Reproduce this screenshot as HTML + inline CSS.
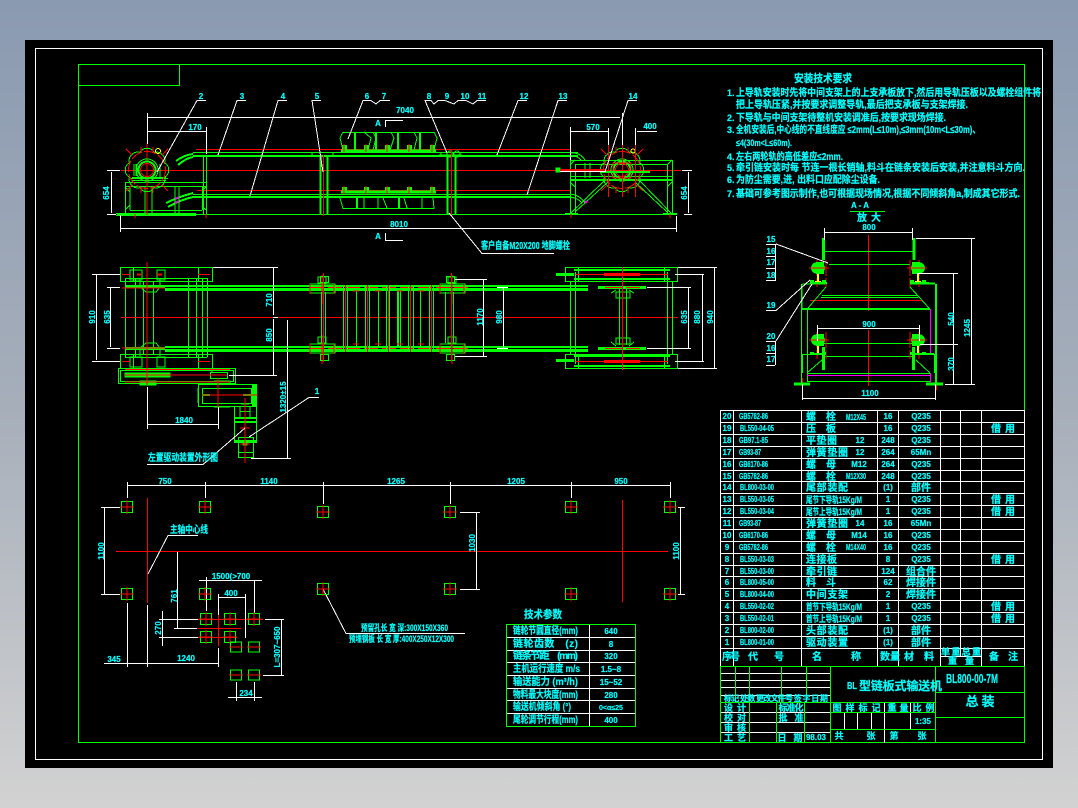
<!DOCTYPE html>
<html lang="zh">
<head>
<meta charset="utf-8">
<title>BL800-00-7M</title>
<style>
html,body{margin:0;padding:0;width:1078px;height:808px;overflow:hidden;background:linear-gradient(#8a9ab1 0%,#a6aeba 50%,#d2d2d2 100%)}
svg{position:absolute;left:0;top:0;display:block;font-size:9px;font-family:"Liberation Sans","Noto Sans CJK SC",sans-serif;font-weight:700}
text{fill:#0ff;stroke:#0ff;stroke-width:.2}
.c{text-anchor:middle}
.s{font-size:8px}
.d{font-size:8px;text-anchor:middle}
.h{font-size:10px;text-anchor:middle}
.n{font-size:10px}
</style>
</head>
<body>
<svg width="1078" height="808" viewBox="0 0 1078 808" shape-rendering="crispEdges">
<defs>
<g id="spr" fill="none">
<path stroke="#0f0" d="M17.6,7.3A8.5,8.5 0 0 1 7.3,17.6A8.5,8.5 0 0 1 -7.3,17.6A8.5,8.5 0 0 1 -17.6,7.3A8.5,8.5 0 0 1 -17.6,-7.3A8.5,8.5 0 0 1 -7.3,-17.6A8.5,8.5 0 0 1 7.3,-17.6A8.5,8.5 0 0 1 17.6,-7.3A8.5,8.5 0 0 1 17.6,7.3Z"/>
<circle r="18.5" stroke="#f00" stroke-dasharray="12 2"/>
<path stroke="#f00" d="M-15,-15L-21,-21M15,-15L21,-21M-15,15L-21,21M15,15L21,21M-6,-18V-23M6,-18V-23M-6,18V23M6,18V23"/>
<circle r="11" stroke="#0f0"/><circle r="9" stroke="#0f0"/><circle r="8" stroke="#0f0"/>
<circle r="6.5" stroke="#f00"/>
</g>
<g id="sq" fill="none">
<rect x="-5.5" y="-5.5" width="11" height="11" stroke="#0f0"/>
<path stroke="#f00" d="M-7,0H7M0,-7V7"/>
</g>
<g id="sq2" fill="none">
<rect x="-5.5" y="-5" width="11" height="10" stroke="#0f0"/>
<path stroke="#f00" d="M-7,0H7"/>
</g>
<g id="blk" fill="none">
<rect x="-2" y="-4" width="5" height="6" fill="#0f0"/>
<path stroke="#f00" d="M0,-5V3"/>
</g>
<g id="brg" fill="none">
<path stroke="#f00" d="M-1,-8V8M8,-8V8M-1,10V19M8,10V19"/>
<ellipse cx="0" cy="0" rx="7" ry="6" fill="#0f0"/>
<rect x="2" y="-6" width="4" height="12" fill="#0f0"/>
<path stroke="#f00" d="M-9,0H11"/>
<path stroke="#ff0" stroke-width="2" d="M0,6V14M-3,14H3"/>
<rect x="-8" y="12" width="4" height="3" fill="#0f0"/>
<rect x="4" y="12" width="4" height="3" fill="#0f0"/>
</g>
<g id="bb" fill="none" stroke="#0f0">
<rect x="-12" y="-4" width="25" height="9"/>
<rect x="-4" y="-11" width="8" height="6"/>
<path stroke="#f00" d="M0,-13V16M-12,-4V6M12,-4V6"/>
</g>
</defs>

<rect x="25" y="40" width="1028" height="728" fill="#000"/>
<rect x="35.5" y="48.5" width="1007" height="711" fill="none" stroke="#fff"/>

<!-- drawing frame -->
<g fill="none" stroke="#0f0">
<rect x="78.5" y="64.5" width="946" height="678"/>
<path d="M78.5,85.5H179.5V64.5"/>
</g>

<!-- ELEVATION VIEW -->
<g fill="none">
<path stroke="#f00" d="M121,170.5H681M196,149.5H570M197,190.5H570"/>
<g stroke="#0f0">
<path d="M193,152.5H578M193,155.5H578M193,156.5H578M193,194.5H570M193,197.5H570M193,196.5H570M117,214.5H677"/>
<path d="M116,213.5H196M116,215.5H196M565,213.5H578M663,213.5H677"/>
<path stroke-width="2" d="M176,161Q184,155 193,154M178,165Q186,158 193,157M166,203Q178,197 193,193M168,207Q180,200 193,197"/>
<path d="M570,153Q580,152 585,160M572,156Q578,156 581,160"/>
<path d="M570,194Q580,195 585,203M570,197Q578,198 582,203"/>
<rect x="125.5" y="182.5" width="81" height="32"/>
<path d="M125,186.5H206M130,186V210M130,210.5H202M202.5,186V210M203.5,156V214M206.5,156V214M175,186V214M179,186V214M152,186V214M145,186V214M125,187L130,192M125,210L130,205M206,187L202,191M206,210L202,206"/>
<path d="M134,164V176M136,164V176M137,164V176M160,177V164M132,177.5H166M130,178.5H168M132,180.5H166"/>
<path stroke-width="2" d="M320.5,155V214M327.5,155V214M447.5,155V214M455.5,155V214"/>
<path stroke-width="2" d="M322,197H326M449,197H454"/>
<path d="M312,153V157M333,153V157M439,155H462M441,153V157M460,153V157"/>
<circle cx="450" cy="154" r="3"/><circle cx="457" cy="154" r="3"/>
<path d="M343,132.5H434M343,132L340,138L343,150M434,132L437,138L434,150M364,132L371,138L368,150M373,132L376,138L373,150M391,132L394,138L390,150M414,132L417,138L414,150"/>
<path stroke-width="2" d="M355,132V150M376,132V150M398,132V150M420,132V150"/>
<path stroke-width="3" d="M341,151H436"/>
<path d="M340,198L343,208.5H434L433,198M340,197.5H436M383,198L387,208M404,198L407,208M378,198V208M364,198V208M422,198V208"/>
<path stroke-width="2" d="M357,198V208M399,198V208"/>
<path stroke-width="3" d="M341,192H436"/>
<path d="M570.5,160.5H672.5V214M570.5,160V214M575.5,164V214M576,164.5H667M667.5,164V214M570,176.5H672M570,179.5H672M570,180.5H672M575,212L608,182M570,214L605,180M635,182L667,212M639,180L672,214"/>
<path d="M585,163V178M590,163V178M667,165L672,160M570,165L575,160M570,182L575,187M667,187L672,182"/>
</g>
<use href="#blk" x="344" y="149"/><use href="#blk" x="366" y="149"/><use href="#blk" x="387" y="149"/><use href="#blk" x="409" y="149"/><use href="#blk" x="432" y="149"/>
<use href="#blk" x="344" y="191"/><use href="#blk" x="366" y="191"/><use href="#blk" x="387" y="191"/><use href="#blk" x="409" y="191"/><use href="#blk" x="432" y="191"/>
<path stroke="#f00" d="M323.5,155V216M451.5,150V216M147,143V215M135,214V218M206,214V218M571,214V218M670,214V218"/>
<path stroke="#f0f" stroke-width="2" d="M175,199L179,197M175,203L179,201M585,201L587,203M585,203L587,201"/>
<use href="#spr" x="147" y="170"/>
<use href="#spr" x="622" y="170"/>
<circle cx="158" cy="151" r="2.5" stroke="#ff0"/>
<circle cx="633" cy="151" r="2" stroke="#ff0"/>
<path stroke="#f00" d="M608.5,145V197M622.5,145V197M635.5,145V197"/>
<rect x="613" y="163" width="18" height="15" stroke="#f00"/>
<path stroke="#0f0" stroke-width="2" d="M600,172H650"/>
<rect x="556" y="168" width="4" height="4" fill="#0f0" stroke="#0f0"/>
<path stroke="#f00" stroke-width="2" d="M560,170H605"/>
<path stroke="#fff" d="M560,171.5H606"/>
<g stroke="#fff">
<path d="M148,117.5H620M147.5,113V144M148,131.5H206M206.5,127V154M121,228.5H676M120.5,215V232M676.5,216V232M107,170.5H120M107,214.5H116M111.5,172V213"/>
<path d="M570.5,127V160M571,131.5H608M608.5,128V145M635.5,128V145M637,131.5H657M622.5,113V145M682,170.5H692M684,214.5H692M688.5,172V213"/>
<path d="M385,120.5H403M385.5,120V127M385,240.5H403M385.5,233V240"/>
<path d="M206,100.5H197L157,172M246,100.5H237L218,155M287,100.5H278L250,196M321,100.5H312L323,172"/>
<path d="M390,100.5H380L376,104L371,100.5H363L348,139"/>
<path d="M486,100.5H477L473,104L466,100.5H458L454,104L445,100.5H438L434,104L431,100.5H425L447,153"/>
<path d="M527,100.5H518L497,155M567,100.5H558L527,195M637,100.5H628L605,172"/>
<path d="M449,213L482,253.5H554"/>
</g>
</g>
<g>
<text class="d" x="201" y="99">2</text>
<text class="d" x="242" y="99">3</text>
<text class="d" x="283" y="99">4</text>
<text class="d" x="317" y="99">5</text>
<text class="d" x="367" y="99">6</text>
<text class="d" x="384" y="99">7</text>
<text class="d" x="429" y="99">8</text>
<text class="d" x="447" y="99">9</text>
<text class="d" x="465" y="99">10</text>
<text class="d" x="482" y="99">11</text>
<text class="d" x="524" y="99">12</text>
<text class="d" x="563" y="99">13</text>
<text class="d" x="633" y="99">14</text>
<text class="d" x="405" y="113">7040</text>
<text class="d" x="195" y="130">170</text>
<text class="d" x="593" y="130">570</text>
<text class="d" x="650" y="129">400</text>
<text class="d" x="399" y="227">8010</text>
<text class="d" x="378" y="126">A</text>
<text class="d" x="378" y="239">A</text>
<text class="d" transform="rotate(-90 109 193)" x="109" y="193">654</text>
<text class="d" transform="rotate(-90 687 193)" x="687" y="193">654</text>
<text x="481" y="249" font-size="10" textLength="89" lengthAdjust="spacingAndGlyphs">客户自备M20X200 地脚螺栓</text>
</g>

<!-- PLAN VIEW -->
<g fill="none">
<path stroke="#0f0" d="M125.5,278.5H207.5V357M125.5,278V357M125,357.5H207M135.5,278V357M143.5,282V354M153.5,282V354M188.5,278V357M196.5,278V357M202.5,278V357"/>
<g stroke="#0f0">
<rect x="120.5" y="267.5" width="92" height="14"/><rect x="120.5" y="267.5" width="13" height="14"/><rect x="198.5" y="267.5" width="14" height="14"/>
<rect x="120.5" y="354.5" width="92" height="14"/><rect x="120.5" y="354.5" width="13" height="14"/><rect x="198.5" y="354.5" width="14" height="14"/>
<path d="M130,270H142V280H130ZM157,270H165V280H157ZM130,357H142V367H130ZM157,357H165V367H157Z"/>
<path d="M140,279V287L146,292H156L160,287V279M140,356V348L146,343H156L160,348V356"/>
<rect x="118.5" y="368.5" width="117" height="15"/><rect x="120.5" y="370.5" width="113" height="11"/>
<rect x="125" y="373" width="45" height="4" fill="#0f0"/>
<rect x="210.5" y="372.5" width="17" height="6"/>
<path d="M140,381H156V385H140Z" fill="#0f0"/>
<path d="M213,369H226M212,368V372"/>
<rect x="198.5" y="384.5" width="58" height="22"/>
<rect x="202.5" y="388.5" width="49" height="15"/>
<path stroke-width="2" d="M202,395H210M243,395H251M253,385V406M255,385V406"/>
<path d="M214,381H230V384M214,407H230M198,388V403"/>
<path d="M234.5,406V417M256.5,406V417M240,406V417M250,406V417M240,411.5H250M241,404H249"/>
<path stroke-width="2" d="M234,418H257M234,422H257M234,441H257"/>
<rect x="234.5" y="417.5" width="22" height="25"/>
<rect x="238.5" y="437.5" width="15" height="20"/>
<path d="M238,452.5H253"/>
<rect x="243" y="441" width="4" height="4" fill="#0f0"/>
</g>
<rect x="125" y="285" width="40" height="3" fill="#0f0"/>
<rect x="125" y="347" width="40" height="3" fill="#0f0"/>
<rect x="165" y="285" width="423" height="2" fill="#0f0"/>
<rect x="165" y="288" width="423" height="3" fill="#0f0"/>
<rect x="165" y="346" width="423" height="2" fill="#0f0"/>
<rect x="165" y="349" width="423" height="3" fill="#0f0"/>
<path stroke="#f00" d="M121,317.5H678M122,288H165M122,348H165M125,375H227M125,369.5H230M125,382H230M202,395H258M245,398V463M218,378V407M147,262V385M122,274.5H130M198,274.5H210M122,361.5H130M198,361.5H210"/>
<path stroke="#f00" stroke-dasharray="14 4" d="M310,287.5H470M310,348.5H470"/>
<path stroke="#f00" d="M240,428H250M240,444H250"/>
<path stroke="#f00" stroke-width="2" d="M137,274.5H141M157,274.5H162"/>
<use href="#bb" x="322" y="288"/>
<use href="#bb" x="322" y="348"/>
<use href="#bb" x="452" y="288"/>
<use href="#bb" x="452" y="348"/>
<g stroke="#0f0">
<rect x="320.5" y="276.5" width="8" height="6" />
<rect x="446.5" y="276.5" width="8" height="6" />
<rect x="320.5" y="354.5" width="8" height="6" />
<rect x="446.5" y="354.5" width="8" height="6" />
<path d="M321.5,292V343M325.5,292V343M445.5,292V343M453.5,292V343"/>
<path d="M343.5,285V352M347.5,285V352M365.5,285V352M369.5,285V352M386.5,285V352M389.5,285V352M408.5,285V352M413.5,285V352M429.5,285V352M433.5,285V352M356.5,290V346M378.5,290V346M400.5,290V346M420.5,290V346"/>
<path stroke-width="2" d="M398,290V346"/>
</g>
<path stroke="#f00" d="M345.5,285V352M367.5,285V352M388.5,285V352M410.5,285V352M431.5,285V352M323.5,273V362M451.5,273V362"/>
<path stroke="#f00" d="M353,291H359M375,291H381M397,291H403M418,291H424M353,344H359M375,344H381M397,344H403M418,344H424"/>
<g stroke="#0f0">
<rect x="565.5" y="267.5" width="112" height="14"/><rect x="565.5" y="267.5" width="13" height="14"/><rect x="664.5" y="267.5" width="13" height="14"/>
<rect x="565.5" y="354.5" width="112" height="14"/><rect x="565.5" y="354.5" width="13" height="14"/><rect x="664.5" y="354.5" width="13" height="14"/>
<path d="M570.5,281V354M575.5,272V364M667.5,272V364M672.5,281V354M619.5,288V345M626.5,288V345"/>
<path d="M611,293L616,290M634,293L629,290M611,342L616,346M634,342L629,346M616,292H630V298H616ZM616,338H630V344H616Z"/>
</g>
<path stroke="#0f0" stroke-width="2" d="M574,270H670M574,279H670M574,356H670M574,366H670"/>
<rect x="598" y="286" width="48" height="3" fill="#0f0"/>
<rect x="598" y="347" width="48" height="3" fill="#0f0"/>
<rect x="556" y="273" width="18" height="3" fill="#0f0"/>
<rect x="556" y="359" width="18" height="3" fill="#0f0"/>
<path stroke="#f00" d="M622.5,267V370M576,274.5H668M576,361.5H668"/>
<path stroke="#f00" stroke-width="3" d="M604,274.5H640M604,361.5H640"/>
<path stroke="#f00" d="M605,287.5H622M626,287.5H640M605,348.5H622M626,348.5H640"/>
<g stroke="#fff">
<path d="M92,274.5H120M92,361.5H120M96.5,275V360M107,287.5H120M107,348.5H120M110.5,288V347"/>
<path d="M213,267.5H278M273.5,268V315M273,317.5H278M273.5,319V375M229,375.5H277"/>
<path d="M287.5,320V458M251,458.5H291M147.5,387V429M218.5,407V429M148,424.5H218"/>
<path d="M455,279.5H487M455,356.5H487M483.5,280V356M497,287.5H508M497,348.5H508M503.5,288V348"/>
<path d="M678,267.5H717M678,368.5H717M714.5,268V368M675,274.5H704M675,361.5H704M702.5,275V361M647,287.5H691M647,348.5H691M688.5,288V348"/>
<path d="M319,397.5H309L249,437M147,464.5H203L245,428"/>
</g>
</g>
<g>
<text class="d" x="317" y="394">1</text>
<text class="d" x="184" y="423">1840</text>
<text class="d" transform="rotate(-90 95 317)" x="95" y="317">910</text>
<text class="d" transform="rotate(-90 110 317)" x="110" y="317">635</text>
<text class="d" transform="rotate(-90 272 300)" x="272" y="300">710</text>
<text class="d" transform="rotate(-90 272 335)" x="272" y="335">850</text>
<text class="d" transform="rotate(-90 286 397)" x="286" y="397">1320±15</text>
<text class="d" transform="rotate(-90 483 317)" x="483" y="317">1170</text>
<text class="d" transform="rotate(-90 502 317)" x="502" y="317">980</text>
<text class="d" transform="rotate(-90 687 317)" x="687" y="317">635</text>
<text class="d" transform="rotate(-90 700 317)" x="700" y="317">880</text>
<text class="d" transform="rotate(-90 713 317)" x="713" y="317">940</text>
<text x="148" y="461" font-size="10" textLength="70" lengthAdjust="spacingAndGlyphs">左置驱动装置外形图</text>
</g>

<!-- FOUNDATION -->
<g fill="none">
<path stroke="#f00" d="M116,551.5H668M147.5,498V603M622.5,500V602M218.5,605V646M197,619.5H263M197,628.5H241M197,637.5H237"/>
<path stroke="#fff" d="M127,485.5H670M127.5,482V498M205.5,482V498M323.5,482V504M450.5,482V504M571.5,482V498M670.5,482V498M101,507.5H120M101,594.5H120M104.5,508V594M678,507.5H685M678,594.5H685M680.5,508V594M460,512.5H480M460,589.5H480M476.5,513V589M198,535.5H168L148,574M177.5,552V628M174,628.5H197M199,580.5H262M206.5,577V611M254.5,581V614M218,597.5H245M218.5,594V615M245.5,594V638M159,619.5H198M159,637.5H198M162.5,611V646M265,619.5H284M263,675.5H284M281.5,619V675M104,663.5H218M127.5,603V667M147.5,605V667M218.5,648V667M228,697.5H262M236.5,682V701M254.5,682V701M323,589L346,633.5H465"/>
<use href="#sq" x="127" y="507"/><use href="#sq" x="205" y="507"/><use href="#sq" x="323" y="512"/><use href="#sq" x="450" y="512"/><use href="#sq" x="571" y="507"/><use href="#sq" x="670" y="507"/>
<use href="#sq" x="127" y="594"/><use href="#sq" x="205" y="594"/><use href="#sq" x="323" y="589"/><use href="#sq" x="450" y="589"/><use href="#sq" x="571" y="594"/><use href="#sq" x="670" y="594"/>
<use href="#sq" x="206" y="619"/><use href="#sq" x="230" y="619"/><use href="#sq" x="254" y="619"/><use href="#sq" x="206" y="637"/><use href="#sq" x="230" y="637"/>
<use href="#sq2" x="236" y="647"/><use href="#sq2" x="254" y="647"/><use href="#sq2" x="236" y="675"/><use href="#sq2" x="254" y="675"/>
</g>
<g>
<text class="d" x="165" y="484">750</text>
<text class="d" x="269" y="484">1140</text>
<text class="d" x="396" y="484">1265</text>
<text class="d" x="516" y="484">1205</text>
<text class="d" x="621" y="484">950</text>
<text class="d" transform="rotate(-90 104 551)" x="104" y="551">1100</text>
<text class="d" transform="rotate(-90 679 551)" x="679" y="551">1100</text>
<text class="d" transform="rotate(-90 475 543)" x="475" y="543">1030</text>
<text class="d" transform="rotate(-90 177 596)" x="177" y="596">761</text>
<text class="d" transform="rotate(-90 161 628)" x="161" y="628">270</text>
<text class="d" transform="rotate(-90 280 647)" x="280" y="647">L=307~650</text>
<text class="d" x="231" y="579">1500(&gt;700</text>
<text class="d" x="231" y="596">400</text>
<text class="d" x="114" y="662">345</text>
<text class="d" x="186" y="661">1240</text>
<text class="d" x="246" y="696">234</text>
<text x="170" y="533" font-size="10" textLength="38" lengthAdjust="spacingAndGlyphs">主轴中心线</text>
<text x="361" y="631" font-size="9" textLength="87" lengthAdjust="spacingAndGlyphs">预留孔长 宽 深:300X150X360</text>
<text x="349" y="642" font-size="9" textLength="105" lengthAdjust="spacingAndGlyphs">预埋钢板 长 宽 厚:400X250X12X300</text>
</g>

<!-- TECH PARAMS -->
<g fill="none">
<path stroke="#fff" d="M506,637.5H635M506,650.5H635M506,662.5H635M506,675.5H635M506,688.5H635M506,700.5H635M506,713.5H635M589.5,624V727"/>
<rect x="506.5" y="624.5" width="129" height="102" stroke="#0f0"/>
</g>
<g>
<text x="524" y="618" font-size="11" textLength="38" lengthAdjust="spacingAndGlyphs">技术参数</text>
<text x="513" y="634" font-size="10" textLength="65" lengthAdjust="spacingAndGlyphs">链轮节圆直径(mm)</text>
<text x="513" y="647" font-size="10" textLength="65" lengthAdjust="spacing">链轮齿数　(z)</text>
<text x="513" y="659" font-size="10" textLength="65" lengthAdjust="spacing">链条节距　(mm)</text>
<text x="513" y="672" font-size="10" textLength="67" lengthAdjust="spacingAndGlyphs">主机运行速度 m/s</text>
<text x="513" y="685" font-size="10" textLength="65" lengthAdjust="spacingAndGlyphs">输送能力 (m³/h)</text>
<text x="513" y="698" font-size="10" textLength="65" lengthAdjust="spacingAndGlyphs">物料最大块度(mm)</text>
<text x="513" y="710" font-size="10" textLength="58" lengthAdjust="spacingAndGlyphs">输送机倾斜角 (°)</text>
<text x="513" y="723" font-size="10" textLength="65" lengthAdjust="spacingAndGlyphs">尾轮调节行程(mm)</text>
<text class="c" x="611" y="634" font-size="8">640</text>
<text class="c" x="611" y="647" font-size="8">8</text>
<text class="c" x="611" y="659" font-size="8">320</text>
<text class="c" x="611" y="672" font-size="8">1.5~8</text>
<text class="c" x="611" y="685" font-size="8">15~52</text>
<text class="c" x="611" y="698" font-size="8">280</text>
<text class="c" x="611" y="710" font-size="7">0&lt;α≤25</text>
<text class="c" x="611" y="723" font-size="8">400</text>
</g>

<!-- INSTALL NOTES -->
<g>
<text x="794" y="82" font-size="11" textLength="58" lengthAdjust="spacingAndGlyphs">安装技术要求</text>
<text x="727" y="96" font-size="9">1.</text>
<text x="736" y="96" font-size="10" textLength="305" lengthAdjust="spacingAndGlyphs">上导轨安装时先将中间支架上的上支承板放下,然后用导轨压板以及螺栓组件将</text>
<text x="736" y="108" font-size="10" textLength="232" lengthAdjust="spacingAndGlyphs">把上导轨压紧,并按要求调整导轨,最后把支承板与支架焊接.</text>
<text x="727" y="121" font-size="9">2.</text>
<text x="736" y="121" font-size="10" textLength="210" lengthAdjust="spacingAndGlyphs">下导轨与中间支架待整机安装调准后,按要求现场焊接.</text>
<text x="727" y="133" font-size="9">3.</text>
<text x="736" y="133" font-size="10" textLength="244" lengthAdjust="spacingAndGlyphs">全机安装后,中心线的不直线度应 ≤2mm(L≤10m),≤3mm(10m&lt;L≤30m)、</text>
<text x="736" y="146" font-size="9" textLength="56" lengthAdjust="spacingAndGlyphs">≤4(30m&lt;L≤60m).</text>
<text x="727" y="160" font-size="9">4.</text>
<text x="736" y="160" font-size="10" textLength="107" lengthAdjust="spacingAndGlyphs">左右两轮轨的高低差应≤2mm.</text>
<text x="727" y="171" font-size="9">5.</text>
<text x="736" y="171" font-size="10" textLength="289" lengthAdjust="spacingAndGlyphs">牵引链安装时每 节连一根长销轴,料斗在链条安装后安装,并注意料斗方向.</text>
<text x="727" y="183" font-size="9">6.</text>
<text x="736" y="183" font-size="10" textLength="144" lengthAdjust="spacingAndGlyphs">为防尘需要,进, 出料口应配除尘设备.</text>
<text x="727" y="197" font-size="9">7.</text>
<text x="736" y="197" font-size="10" textLength="284" lengthAdjust="spacingAndGlyphs">基础可参考图示制作,也可根据现场情况,根据不同倾斜角a,制成其它形式.</text>
</g>

<!-- SECTION A-A -->
<g fill="none">
<path stroke="#0f0" d="M850,211.5H885"/>
<path stroke="#f00" d="M868.5,235V311M868.5,330V386M810,300.5H923M802.5,378V390M936.5,378V390"/>
<g stroke="#0f0">
<path stroke-width="3" d="M823.5,238V260M914,238V260M823.5,347V370M913.5,347V370M794,384H810M926,384H943"/>
<path stroke-width="2" d="M810,283.5H827M910,283.5H935M936,284V384"/>
<path d="M823,251.5H915M829,264.5H910M801.5,284V383M802.5,284H810M807.5,309V382"/>
<path d="M802,284V308M826,287L808,308M910,287L929,308M822,295.5H917M821,297.5H918M802,308.5H930M802,309.5H930"/>
<path d="M823,343.5H913M802,354.5H823M913,354.5H934M823,356.5H913M802.5,354V373M934.5,354V373M822,360L807,373M916,360L930,373M807,373.5H930M807,381.5H930"/>
</g>
<path stroke="#f0f" d="M930.5,309V353M930.5,373V383M807,375.5H930"/>
<use href="#brg" x="818" y="268"/>
<g transform="translate(918 268) scale(-1 1)"><use href="#brg"/></g>
<use href="#brg" x="818" y="340"/>
<g transform="translate(918 340) scale(-1 1)"><use href="#brg"/></g>
<path stroke="#0f0" stroke-width="2" d="M810,283H827M910,283H929M810,354H823M913,354H934"/>
<g stroke="#fff">
<path d="M824,232.5H912M824.5,228V240M912.5,228V240M817,328.5H919M817.5,325V341M919.5,325V341"/>
<path d="M916,238.5H975M971.5,238V384M917,273.5H958M920,344.5H958M945,384.5H975M953.5,273V384M802,398.5H935M802.5,384V400M935.5,384V400"/>
<path d="M766,244.5H776M766,256.5H775M766,268.5H775M766,280.5H776M775.5,244V280M776,244L828,263"/>
<path d="M766,310.5H776L810,280"/>
<path d="M766,341.5H776M766,353.5H775M766,365.5H775M775.5,341V365M776,341L812,284"/>
</g>
</g>
<g>
<text class="d" x="860" y="208">A - A</text>
<text class="c" x="862" y="221" font-size="10">放</text>
<text class="c" x="876" y="221" font-size="10">大</text>
<text class="d" x="869" y="230">800</text>
<text class="d" x="869" y="327">900</text>
<text class="d" x="870" y="396">1100</text>
<text class="d" transform="rotate(-90 970 328)" x="970" y="328">1245</text>
<text class="d" transform="rotate(-90 954 319)" x="954" y="319">540</text>
<text class="d" transform="rotate(-90 954 364)" x="954" y="364">370</text>
<text class="d" x="771" y="242">15</text>
<text class="d" x="771" y="254">16</text>
<text class="d" x="771" y="265">17</text>
<text class="d" x="771" y="278">18</text>
<text class="d" x="771" y="308">19</text>
<text class="d" x="771" y="339">20</text>
<text class="d" x="771" y="351">16</text>
<text class="d" x="771" y="362">17</text>
</g>

<!-- PARTS LIST lines -->
<g fill="none" stroke="#fff">
<path d="M720,410.5H1025M720,422.5H1025M720,434.5H1025M720,446.5H1025M720,458.5H1025M720,470.5H1025M720,481.5H1025M720,493.5H1025M720,505.5H1025M720,517.5H1025M720,529.5H1025M720,541.5H1025M720,553.5H1025M720,565.5H1025M720,576.5H1025M720,588.5H1025M720,600.5H1025M720,612.5H1025M720,624.5H1025M720,636.5H1025M720,648.5H1025"/>
<path d="M720.5,410V666M733.5,410V666M801.5,410V666M877.5,410V666M898.5,410V666M940.5,410V666M960.5,410V656M981.5,410V666M1024.5,410V666M940,656.5H981"/>
<path d="M720,673.5H830M720,680.5H830M720,687.5H830M720,695.5H830M720,712.5H830M720,722.5H830M720,732.5H830M884.5,702V743M910.5,702V729M844.5,712V729M857.5,712V729M871.5,712V729"/>
</g>
<g fill="none" stroke="#0f0">
<path d="M720,666.5H1025M720.5,666V743M735.5,666V703M749.5,666V743M781.5,666V703M806.5,666V703M720,702.5H935M776.5,703V743M804.5,703V743M830.5,666V743M935.5,666V743M935,692.5H1025M935,717.5H1025M830,712.5H935M830,729.5H935"/>
</g>

<!-- PARTS TEXT -->
<g>
<text class="c s" x="727" y="419">20</text><text class="s" x="739" y="419" textLength="29" lengthAdjust="spacingAndGlyphs">GB5782-86</text><text class="n" x="806" y="420" textLength="30" lengthAdjust="spacing">螺 栓</text><text class="s" x="846" y="420" textLength="20" lengthAdjust="spacingAndGlyphs">M12X45</text><text class="c s" x="888" y="419">16</text><text class="c s" x="921" y="419">Q235</text>

<text class="c s" x="727" y="431">19</text><text class="s" x="740" y="431" textLength="34" lengthAdjust="spacingAndGlyphs">BL550-04-05</text><text class="n" x="806" y="432" textLength="30" lengthAdjust="spacing">压 板</text><text class="c s" x="888" y="431">16</text><text class="c s" x="921" y="431">Q235</text><text class="c n" x="1003" y="432" textLength="24" lengthAdjust="spacing">借 用</text>

<text class="c s" x="727" y="443">18</text><text class="s" x="739" y="443" textLength="29" lengthAdjust="spacingAndGlyphs">GB97.1-85</text><text class="n" x="806" y="444" textLength="31" lengthAdjust="spacing">平垫圈</text><text class="c s" x="860" y="443">12</text><text class="c s" x="888" y="443">248</text><text class="c s" x="921" y="443">Q235</text>

<text class="c s" x="727" y="455">17</text><text class="s" x="739" y="455" textLength="22" lengthAdjust="spacingAndGlyphs">GB93-87</text><text class="n" x="806" y="456" textLength="42" lengthAdjust="spacing">弹簧垫圈</text><text class="c s" x="860" y="455">12</text><text class="c s" x="888" y="455">264</text><text class="c s" x="921" y="455">65Mn</text>

<text class="c s" x="727" y="467">16</text><text class="s" x="739" y="467" textLength="29" lengthAdjust="spacingAndGlyphs">GB6170-86</text><text class="n" x="806" y="468" textLength="30" lengthAdjust="spacing">螺 母</text><text class="c s" x="859" y="467">M12</text><text class="c s" x="888" y="467">264</text><text class="c s" x="921" y="467">Q235</text>

<text class="c s" x="727" y="479">15</text><text class="s" x="739" y="479" textLength="29" lengthAdjust="spacingAndGlyphs">GB5782-86</text><text class="n" x="806" y="480" textLength="30" lengthAdjust="spacing">螺 栓</text><text class="s" x="846" y="479" textLength="20" lengthAdjust="spacingAndGlyphs">M12X30</text><text class="c s" x="888" y="479">248</text><text class="c s" x="921" y="479">Q235</text>

<text class="c s" x="727" y="490">14</text><text class="s" x="740" y="490" textLength="34" lengthAdjust="spacingAndGlyphs">BL800-03-00</text><text class="n" x="806" y="491" textLength="42" lengthAdjust="spacing">尾部装配</text><text class="c s" x="888" y="490">(1)</text><text class="c n" x="921" y="491">部件</text>

<text class="c s" x="727" y="502">13</text><text class="s" x="740" y="502" textLength="34" lengthAdjust="spacingAndGlyphs">BL550-03-05</text><text x="806" y="503" font-size="9" textLength="56" lengthAdjust="spacingAndGlyphs">尾节下导轨15Kg/M</text><text class="c s" x="888" y="502">1</text><text class="c s" x="921" y="502">Q235</text><text class="c n" x="1003" y="503" textLength="24" lengthAdjust="spacing">借 用</text>

<text class="c s" x="727" y="514">12</text><text class="s" x="740" y="514" textLength="34" lengthAdjust="spacingAndGlyphs">BL550-03-04</text><text x="806" y="515" font-size="9" textLength="56" lengthAdjust="spacingAndGlyphs">尾节上导轨15Kg/M</text><text class="c s" x="888" y="514">1</text><text class="c s" x="921" y="514">Q235</text><text class="c n" x="1003" y="515" textLength="24" lengthAdjust="spacing">借 用</text>

<text class="c s" x="727" y="526">11</text><text class="s" x="739" y="526" textLength="22" lengthAdjust="spacingAndGlyphs">GB93-87</text><text class="n" x="806" y="527" textLength="42" lengthAdjust="spacing">弹簧垫圈</text><text class="c s" x="860" y="526">14</text><text class="c s" x="888" y="526">16</text><text class="c s" x="921" y="526">65Mn</text>

<text class="c s" x="727" y="538">10</text><text class="s" x="739" y="538" textLength="29" lengthAdjust="spacingAndGlyphs">GB6170-86</text><text class="n" x="806" y="539" textLength="30" lengthAdjust="spacing">螺 母</text><text class="c s" x="859" y="538">M14</text><text class="c s" x="888" y="538">16</text><text class="c s" x="921" y="538">Q235</text>

<text class="c s" x="727" y="550">9</text><text class="s" x="739" y="550" textLength="29" lengthAdjust="spacingAndGlyphs">GB5782-86</text><text class="n" x="806" y="551" textLength="30" lengthAdjust="spacing">螺 栓</text><text class="s" x="846" y="550" textLength="20" lengthAdjust="spacingAndGlyphs">M14X40</text><text class="c s" x="888" y="550">16</text><text class="c s" x="921" y="550">Q235</text>

<text class="c s" x="727" y="562">8</text><text class="s" x="740" y="562" textLength="34" lengthAdjust="spacingAndGlyphs">BL550-03-03</text><text class="n" x="806" y="563" textLength="31" lengthAdjust="spacing">连接板</text><text class="c s" x="888" y="562">8</text><text class="c s" x="921" y="562">Q235</text><text class="c n" x="1003" y="563" textLength="24" lengthAdjust="spacing">借 用</text>

<text class="c s" x="727" y="574">7</text><text class="s" x="740" y="574" textLength="34" lengthAdjust="spacingAndGlyphs">BL550-03-00</text><text class="n" x="806" y="575" textLength="31" lengthAdjust="spacing">牵引链</text><text class="c s" x="888" y="574">124</text><text class="c n" x="921" y="575">组合件</text>

<text class="c s" x="727" y="585">6</text><text class="s" x="740" y="585" textLength="34" lengthAdjust="spacingAndGlyphs">BL800-05-00</text><text class="n" x="806" y="586" textLength="30" lengthAdjust="spacing">料 斗</text><text class="c s" x="888" y="585">62</text><text class="c n" x="921" y="586">焊接件</text>

<text class="c s" x="727" y="597">5</text><text class="s" x="740" y="597" textLength="34" lengthAdjust="spacingAndGlyphs">BL800-04-00</text><text class="n" x="806" y="598" textLength="42" lengthAdjust="spacing">中间支架</text><text class="c s" x="888" y="597">2</text><text class="c n" x="921" y="598">焊接件</text>

<text class="c s" x="727" y="609">4</text><text class="s" x="740" y="609" textLength="34" lengthAdjust="spacingAndGlyphs">BL550-02-02</text><text x="806" y="610" font-size="9" textLength="56" lengthAdjust="spacingAndGlyphs">首节下导轨15Kg/M</text><text class="c s" x="888" y="609">1</text><text class="c s" x="921" y="609">Q235</text><text class="c n" x="1003" y="610" textLength="24" lengthAdjust="spacing">借 用</text>

<text class="c s" x="727" y="621">3</text><text class="s" x="740" y="621" textLength="34" lengthAdjust="spacingAndGlyphs">BL550-02-01</text><text x="806" y="622" font-size="9" textLength="56" lengthAdjust="spacingAndGlyphs">首节上导轨15Kg/M</text><text class="c s" x="888" y="621">1</text><text class="c s" x="921" y="621">Q235</text><text class="c n" x="1003" y="622" textLength="24" lengthAdjust="spacing">借 用</text>

<text class="c s" x="727" y="633">2</text><text class="s" x="740" y="633" textLength="34" lengthAdjust="spacingAndGlyphs">BL800-02-00</text><text class="n" x="806" y="634" textLength="42" lengthAdjust="spacing">头部装配</text><text class="c s" x="888" y="633">(1)</text><text class="c n" x="921" y="634">部件</text>

<text class="c s" x="727" y="645">1</text><text class="s" x="740" y="645" textLength="34" lengthAdjust="spacingAndGlyphs">BL800-01-00</text><text class="n" x="806" y="646" textLength="42" lengthAdjust="spacing">驱动装置</text><text class="c s" x="888" y="645">(1)</text><text class="c n" x="921" y="646">部件</text>

<!-- header -->
<text x="722" y="660" font-size="10">序</text>
<text x="730" y="660" font-size="10">号</text>
<text class="h" x="753" y="660">代</text><text class="h" x="779" y="660">号</text>
<text class="h" x="817" y="660">名</text><text class="h" x="856" y="660">称</text>
<text class="h" x="885" y="660">数</text><text class="h" x="895" y="660">量</text>
<text class="h" x="909" y="660">材</text><text class="h" x="929" y="660">料</text>
<text class="c" x="961" y="655" font-size="9" textLength="40" lengthAdjust="spacing">单重总重</text>
<text class="c" x="961" y="664" font-size="9" textLength="26" lengthAdjust="spacing">重 量</text>
<text class="h" x="994" y="660">备</text><text class="h" x="1013" y="660">注</text>

<!-- title block -->
<text x="724" y="701" font-size="8" textLength="104" lengthAdjust="spacing">标记 处数 更改文件号 签 字 日 期</text>
<text x="724" y="711" font-size="9" textLength="22" lengthAdjust="spacing">设 计</text>
<text x="724" y="721" font-size="9" textLength="22" lengthAdjust="spacing">校 对</text>
<text x="724" y="731" font-size="9" textLength="22" lengthAdjust="spacing">审 核</text>
<text x="724" y="741" font-size="9" textLength="22" lengthAdjust="spacing">工 艺</text>
<text class="c" x="791" y="711" font-size="9" textLength="25" lengthAdjust="spacing">标准化</text>
<text class="c" x="791" y="721" font-size="9" textLength="25" lengthAdjust="spacing">批 准</text>
<text class="c" x="790" y="741" font-size="9" textLength="25" lengthAdjust="spacing">日 期</text>
<text class="c s" x="816" y="740">98.03</text>
<text x="847" y="689" font-size="10" textLength="10" lengthAdjust="spacingAndGlyphs">BL</text>
<text x="859" y="690" font-size="12" textLength="83" lengthAdjust="spacing">型链板式输送机</text>
<text x="946" y="683" font-size="13" textLength="52" lengthAdjust="spacingAndGlyphs">BL800-00-7M</text>
<text class="c" x="972" y="706" font-size="13">总</text>
<text class="c" x="988" y="706" font-size="13">装</text>
<text class="c" x="837" y="711" font-size="9">图</text><text class="c" x="850" y="711" font-size="9">样</text><text class="c" x="863" y="711" font-size="9">标</text><text class="c" x="876" y="711" font-size="9">记</text>
<text class="c" x="892" y="711" font-size="9">重</text><text class="c" x="904" y="711" font-size="9">量</text>
<text class="c" x="917" y="711" font-size="9">比</text><text class="c" x="930" y="711" font-size="9">例</text>
<text class="c s" x="923" y="724">1:35</text>
<text class="c" x="839" y="739" font-size="9">共</text><text class="c" x="871" y="739" font-size="9">张</text>
<text class="c" x="894" y="739" font-size="9">第</text><text class="c" x="922" y="739" font-size="9">张</text>
</g>
</svg>
</body>
</html>
